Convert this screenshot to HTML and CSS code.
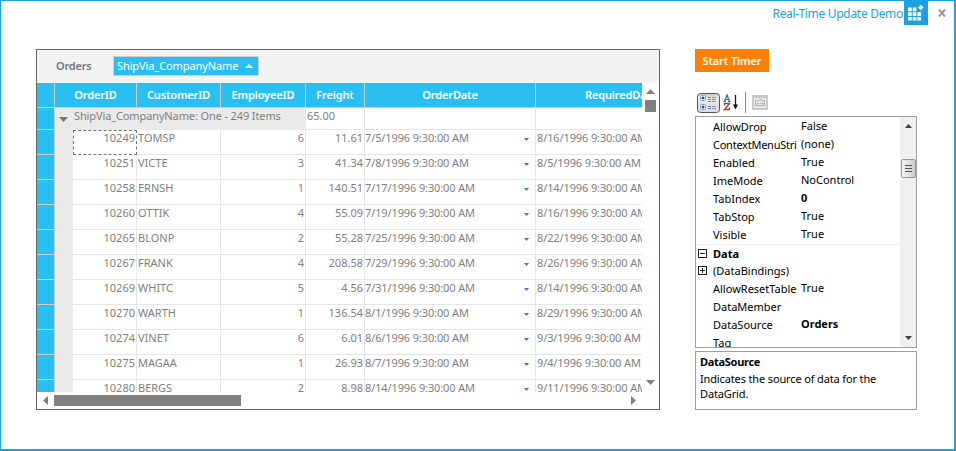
FILE: index.html
```html
<!DOCTYPE html>
<html lang="en">
<head>
<meta charset="utf-8">
<title>Real-Time Update Demo</title>
<link rel="stylesheet" href="styles.css">
</head>
<body>
<div class="window">
  <header class="titlebar">
    <span class="title">Real-Time Update Demo</span>
    <svg class="logo" width="24" height="24" viewBox="0 0 24 24"><path d="M0 0h24v24H0z" fill="#1ba1e2"/><path fill="#fff" d="M4 6.500h3.700v3.700H4zM8.700 6.500h3.700v3.700H8.700zM4 11.200h3.700v3.700H4zM8.700 11.200h3.700v3.700H8.700zM13.400 11.200h3.700v3.700h-3.700zM4 15.900h3.700v3.700H4zM8.700 15.900h3.700v3.700H8.700zM13.400 15.900h3.700v3.700h-3.700z"/><path fill="#fff" d="M16.800 3.700L19.600 6.500L16.800 9.300L14 6.500z"/></svg>
    <svg class="close" width="8" height="8" viewBox="0 0 8 8"><path d="M1 .5L7 7.500M7 .5L1 7.500" stroke="#999" stroke-width="2"/></svg>
  </header>
  <main class="content">
    <section class="datagrid">
      <div class="groupbar"><span class="caption">Orders</span><span class="chip"><span>ShipVia_CompanyName</span><svg width="8" height="4" viewBox="0 0 8 4"><path d="M0 4L4 0L8 4z" fill="#fff"/></svg></span></div>
      <div class="gridarea">
        <div class="viewport">
          <div class="row head"><i class="rh"></i><b class="wide">OrderID</b><b>CustomerID</b><b>EmployeeID</b><b>Freight</b><b>OrderDate</b><b>RequiredDate</b></div>
          <div class="row group"><i class="rh"></i><span class="grouptitle"><svg width="9" height="5" viewBox="0 0 9 5"><path d="M0 0H9L4.500 5z" fill="#777"/></svg><span>ShipVia_CompanyName: One - 249 Items</span></span><span>65.00</span><span></span><span></span></div>
          <div class="row"><i class="rh"></i><i class="indent"></i><span class="n focus">10249</span><span>TOMSP</span><span class="n">6</span><span class="n">11.61</span><span class="date">7/5/1996 9:30:00 AM</span><span class="req">8/16/1996 9:30:00 AM</span></div>
          <div class="row"><i class="rh"></i><i class="indent"></i><span class="n">10251</span><span>VICTE</span><span class="n">3</span><span class="n">41.34</span><span class="date">7/8/1996 9:30:00 AM</span><span class="req">8/5/1996 9:30:00 AM</span></div>
          <div class="row"><i class="rh"></i><i class="indent"></i><span class="n">10258</span><span>ERNSH</span><span class="n">1</span><span class="n">140.51</span><span class="date">7/17/1996 9:30:00 AM</span><span class="req">8/14/1996 9:30:00 AM</span></div>
          <div class="row"><i class="rh"></i><i class="indent"></i><span class="n">10260</span><span>OTTIK</span><span class="n">4</span><span class="n">55.09</span><span class="date">7/19/1996 9:30:00 AM</span><span class="req">8/16/1996 9:30:00 AM</span></div>
          <div class="row"><i class="rh"></i><i class="indent"></i><span class="n">10265</span><span>BLONP</span><span class="n">2</span><span class="n">55.28</span><span class="date">7/25/1996 9:30:00 AM</span><span class="req">8/22/1996 9:30:00 AM</span></div>
          <div class="row"><i class="rh"></i><i class="indent"></i><span class="n">10267</span><span>FRANK</span><span class="n">4</span><span class="n">208.58</span><span class="date">7/29/1996 9:30:00 AM</span><span class="req">8/26/1996 9:30:00 AM</span></div>
          <div class="row"><i class="rh"></i><i class="indent"></i><span class="n">10269</span><span>WHITC</span><span class="n">5</span><span class="n">4.56</span><span class="date">7/31/1996 9:30:00 AM</span><span class="req">8/14/1996 9:30:00 AM</span></div>
          <div class="row"><i class="rh"></i><i class="indent"></i><span class="n">10270</span><span>WARTH</span><span class="n">1</span><span class="n">136.54</span><span class="date">8/1/1996 9:30:00 AM</span><span class="req">8/29/1996 9:30:00 AM</span></div>
          <div class="row"><i class="rh"></i><i class="indent"></i><span class="n">10274</span><span>VINET</span><span class="n">6</span><span class="n">6.01</span><span class="date">8/6/1996 9:30:00 AM</span><span class="req">9/3/1996 9:30:00 AM</span></div>
          <div class="row"><i class="rh"></i><i class="indent"></i><span class="n">10275</span><span>MAGAA</span><span class="n">1</span><span class="n">26.93</span><span class="date">8/7/1996 9:30:00 AM</span><span class="req">9/4/1996 9:30:00 AM</span></div>
          <div class="row"><i class="rh"></i><i class="indent"></i><span class="n">10280</span><span>BERGS</span><span class="n">2</span><span class="n">8.98</span><span class="date">8/14/1996 9:30:00 AM</span><span class="req">9/11/1996 9:30:00 AM</span></div>
        </div>
        <div class="vscroll">
          <svg width="9" height="5" viewBox="0 0 9 5"><path d="M0 5L4.500 0L9 5z" fill="#808080"/></svg>
          <i class="vthumb"></i>
          <svg class="down" width="9" height="5" viewBox="0 0 9 5"><path d="M0 0H9L4.500 5z" fill="#808080"/></svg>
        </div>
      </div>
      <div class="hscroll">
        <svg width="5" height="9" viewBox="0 0 5 9"><path d="M5 0V9L0 4.500z" fill="#808080"/></svg>
        <i class="hthumb"></i>
        <svg class="right" width="5" height="9" viewBox="0 0 5 9"><path d="M0 0V9L5 4.500z" fill="#808080"/></svg>
      </div>
    </section>
    <aside class="side">
      <button class="start">Start Timer</button>
      <div class="toolbar">
        <svg width="80" height="22" viewBox="0 0 80 22">
          <defs><linearGradient id="pressed" x1="0" y1="0" x2="0" y2="1"><stop offset="0" stop-color="#c9c9c9"/><stop offset=".25" stop-color="#e9e9e9"/><stop offset="1" stop-color="#ddd"/></linearGradient></defs>
          <rect x="2.500" y="1.500" width="22" height="19" rx="3" fill="url(#pressed)" stroke="#555"/>
          <rect x="5.500" y="3.500" width="5" height="5" rx="1" fill="#fff" stroke="#6fa5d8"/><rect x="5.500" y="12.500" width="5" height="5" rx="1" fill="#fff" stroke="#6fa5d8"/>
          <path d="M6.500 6h3M8 4.500v3M6.500 15h3M8 13.500v3" stroke="#111"/>
          <path d="M13 5.500h3M13 7.500h3M13 9.500h3M13 14.500h3M13 16.500h3" stroke="#5c83b5"/><path d="M17 5.500h4M17 7.500h4M17 9.500h4M17 14.500h4M17 16.500h4" stroke="#8c9095"/>
          <path d="M29.500 9.500L32 3L34.500 9.500M30.500 7.500h3M28.500 9.500h2.500M33 9.500h2.500" fill="none" stroke="#3367b0" stroke-width="1.200"/>
          <path d="M29.500 13.500v-2h5L29.500 17.500h5v-2" fill="none" stroke="#a03c40" stroke-width="1.400"/>
          <path d="M40.500 3v12" stroke="#111" stroke-width="1.300"/><path d="M38 12.500h5L40.500 17.500z" fill="#111"/>
          <path d="M50.500 0v21" stroke="#8b8b8b"/>
          <path d="M57 3h16v15H57z" fill="#c9c9c9"/><path d="M59 6h12v10H59z" fill="#e9e9e9"/><path d="M60.500 13.500v-5h3l1-1h2v1h3v5z" fill="#e6e6e6" stroke="#b0b0b0"/><path d="M62 11.500h2M65.500 11.500h3" stroke="#b0b0b0"/>
        </svg>
      </div>
      <div class="props">
        <div class="proplist">
          <div class="prop"><span>AllowDrop</span><em>False</em></div>
          <div class="prop"><span class="long">ContextMenuStri</span><em>(none)</em></div>
          <div class="prop"><span>Enabled</span><em>True</em></div>
          <div class="prop"><span>ImeMode</span><em>NoControl</em></div>
          <div class="prop"><span>TabIndex</span><em class="set">0</em></div>
          <div class="prop"><span>TabStop</span><em>True</em></div>
          <div class="prop"><span>Visible</span><em>True</em></div>
          <div class="prop category"><i class="box"></i><span>Data</span></div>
          <div class="prop"><i class="box plus"></i><span>(DataBindings)</span></div>
          <div class="prop"><span>AllowResetTable</span><em>True</em></div>
          <div class="prop"><span>DataMember</span></div>
          <div class="prop"><span>DataSource</span><em class="set">Orders</em></div>
          <div class="prop"><span>Tag</span></div>
        </div>
        <div class="pscroll">
          <svg width="7" height="4" viewBox="0 0 7 4"><path d="M0 4L3.500 0L7 4z" fill="#444"/></svg>
          <i class="grip"><svg width="7" height="8" viewBox="0 0 7 8"><path d="M0 .5h7M0 3.500h7M0 6.500h7" stroke="#555"/></svg></i>
          <svg class="pdown" width="7" height="4" viewBox="0 0 7 4"><path d="M0 0H7L3.500 4z" fill="#444"/></svg>
        </div>
      </div>
      <div class="help"><strong>DataSource</strong><p>Indicates the source of data for the DataGrid.</p></div>
    </aside>
  </main>
</div>
</body>
</html>
```
FILE: styles.css
```css
* { box-sizing: border-box; }
body { margin: 0; font: 11px/14px "Noto Sans", "Open Sans", sans-serif; color: #000; background: #fff; }
i, em { font-style: normal; }
svg { display: block; flex: none; }
.window { width: 956px; height: 451px; border: 1px solid #1ba1e2; border-right-width: 2px; border-bottom-width: 2px; overflow: hidden; }
.titlebar { height: 48px; display: flex; justify-content: flex-end; align-items: flex-start; padding-right: 8px; }
.title { color: #1ba1e2; font-size: 12px; line-height: 16px; margin-top: 5px; margin-right: 1px; white-space: nowrap; letter-spacing: -.3px; }
.close { margin: 8px 0 0 10px; }
.content { display: flex; gap: 35px; padding-left: 35px; }
.datagrid { width: 624px; height: 361px; border: 1px solid #666; color: #808080; }
.groupbar { height: 33px; background: #f3f3f3; display: flex; align-items: center; padding: 0 0 2px 19px; }
.caption { width: 57px; font-weight: 600; letter-spacing: -.2px; color: #767676; }
.chip { width: 146px; height: 20px; display: flex; align-items: center; justify-content: space-between; padding: 0 5px 0 3px; color: #fff; background: #2abff1; border: 1px solid #d0d0d0; letter-spacing: -.1px; }
.gridarea { display: flex; height: 309px; }
.viewport { width: 605px; overflow: hidden; }
.row { display: grid; grid-template-columns: 18px 18px 64px 84px 85px 59px 171px 171px; height: 25px; width: 688px; }
.row > * { border-right: 1px solid #e6e6e6; border-bottom: 1px solid #e6e6e6; padding: 1px 1px 0; white-space: nowrap; overflow: hidden; }
.row > .rh { background: #2abff1; border-color: #ccc; }
.row > .indent { background: #eaeaea; border: 0; }
.row.head > * { background: #2abff1; border-color: #ccc; }
.head b { color: #fff; font-weight: 600; letter-spacing: -.15px; text-align: center; padding-top: 5px; }
.head .wide { grid-column: span 2; }
.group { height: 22px; }
.group .grouptitle { grid-column: span 4; display: flex; gap: 6px; background: #eaeaea; border-color: #eaeaea; padding-left: 4px; letter-spacing: -.12px; }
.grouptitle svg { margin-top: 8px; }
.n { text-align: right; }
.row > .focus { border: 1px dashed #777; padding-top: 0; padding-right: 1px; }
.date, .req { letter-spacing: -.12px; }
.row > .date { display: flex; justify-content: space-between; padding-left: 0; }
.date::after { content: ""; width: 5px; height: 3px; background: #4778b0; clip-path: polygon(0 0, 100% 0, 50% 100%); margin: 7px 5px 0 0; }
.vscroll { flex: 1; display: flex; flex-direction: column; align-items: center; padding: 6px 0 7px; margin-right: 1px; }
.vthumb { width: 11px; height: 12px; background: #808080; margin-top: 6px; }
.down { margin-top: auto; }
.hscroll { height: 17px; display: flex; align-items: center; padding: 0 23px 0 6px; }
.hthumb { width: 187px; height: 11px; background: #808080; margin-left: 6px; }
.right { margin-left: auto; }
.side { width: 222px; height: 361px; display: flex; flex-direction: column; }
.start { width: 74px; height: 23px; border: 0; padding: 1px 0 0; background: #ff8000; color: #fff; font: 600 11px/16px "Noto Sans", sans-serif; letter-spacing: -.1px; white-space: nowrap; }
.toolbar { margin-top: 20px; height: 24px; }
.props { height: 232px; border: 1px solid #a0a0a0; display: flex; overflow: hidden; }
.proplist { width: 204px; padding-top: 1px; }
.prop { height: 18px; display: grid; grid-template-columns: 17px 85px 1fr; line-height: 18px; white-space: nowrap; }
.prop span { grid-column: 2; grid-row: 1; overflow: hidden; }
.prop .long { letter-spacing: -.25px; }
.prop em { grid-column: 3; margin: -1px 0 0 3px; }
.set, .category { font-weight: 700; }
.category { border-top: 1px solid #eee; line-height: 17px; }
.box { grid-row: 1; grid-column: 1; width: 9px; height: 9px; margin: 4px 0 0 2px; border: 1px solid #222; background: linear-gradient(#222, #222) center / 5px 1px no-repeat; }
.plus { background: linear-gradient(#222, #222) center / 5px 1px no-repeat, linear-gradient(#222, #222) center / 1px 5px no-repeat; }
.pscroll { width: 16px; background: #f0f0f0; display: flex; flex-direction: column; align-items: center; padding: 7px 0; }
.grip { width: 15px; height: 19px; margin-top: 31px; border: 1px solid #999; border-radius: 2px; background: linear-gradient(90deg, #f5f5f5, #ccc); display: flex; align-items: center; justify-content: center; }
.pdown { margin-top: auto; }
.help { height: 59px; margin-top: 3px; border: 1px solid #a0a0a0; padding: 2px 4px; line-height: 15px; letter-spacing: -.14px; }
.help strong { display: block; letter-spacing: -.3px; }
.help p { margin: 2px 0 0; }
```
